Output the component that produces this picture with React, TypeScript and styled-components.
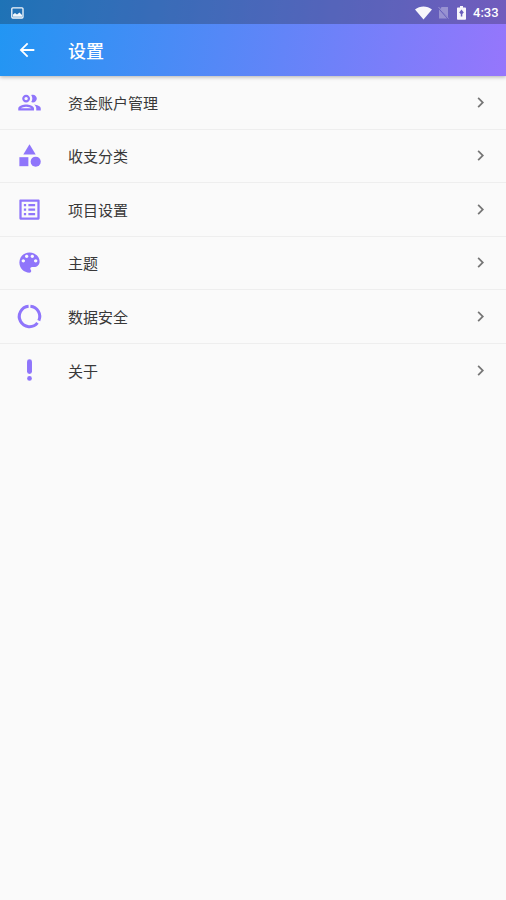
import React from "react";
import styled, { createGlobalStyle } from "styled-components";
import { MdArrowBack, MdCategory, MdChevronRight, MdListAlt, MdOutlinePeople } from "react-icons/md";

const GlobalStyle = createGlobalStyle`
  * { box-sizing: border-box; }
  body {
    margin: 0;
    background: #fafafa;
    font-family: Roboto, "Noto Sans CJK SC", sans-serif;
  }
`;

const Screen = styled.div`
  display: flex;
  flex-direction: column;
  min-height: 900px;
  background: #fafafa;
`;

const Header = styled.header`
  background: linear-gradient(100deg, #2196f3 0%, #9676fc 100%);
  box-shadow: 0 1px 4px rgba(0, 0, 0, 0.3);
`;

const StatusBar = styled.div`
  display: flex;
  align-items: center;
  height: 24px;
  padding: 1px 7px 0 11px;
  background: rgba(25, 25, 25, 0.28);
  color: #fff;
`;

const StatusIcons = styled.div`
  display: flex;
  align-items: center;
  margin-left: auto;
`;

const Glyph = styled.svg<{ $gap?: number; $dim?: boolean }>`
  display: block;
  flex: none;
  margin-right: ${(p) => p.$gap ?? 0}px;
  opacity: ${(p) => (p.$dim ? 0.32 : 0.95)};
`;

const Clock = styled.span`
  width: 26px;
  font-size: 13px;
  font-weight: 500;
  line-height: 16px;
  white-space: nowrap;
`;

const Toolbar = styled.div`
  display: flex;
  align-items: center;
  height: 52px;
  padding-left: 16px;
  color: #fff;
`;

const BackButton = styled.button`
  display: flex;
  width: 22px;
  margin: 0 30px 0 0;
  padding: 0;
  border: 0;
  background: none;
  color: inherit;
  font-size: 22px;
`;

const Title = styled.h1`
  margin: 0;
  padding-top: 3px;
  font-size: 18px;
  font-weight: 500;
  line-height: 26px;
`;

const List = styled.ul`
  margin: 0;
  padding: 0;
  list-style: none;
`;

const Row = styled.li`
  display: flex;
  align-items: center;
  height: 53.5px;
  padding: 0 15px 0 16px;
  border-bottom: 1px solid #eeeeee;

  &:last-child {
    border-bottom: 0;
  }
`;

const RowIcon = styled.span`
  display: flex;
  width: 52px;
  color: #8f75fb;
  font-size: 27px;
`;

const Label = styled.span`
  flex: 1;
  padding-top: 3px;
  color: #383838;
  font-size: 15px;
  line-height: 22px;
`;

const Arrow = styled(MdChevronRight)`
  width: 21px;
  height: 21px;
  color: #757575;
`;

const PaletteIcon = () => (
  <svg width="1em" height="1em" viewBox="0 0 24 24" fill="currentColor">
    <path d="M12 3c-4.97 0-9 4.03-9 9s4.03 9 9 9c.83 0 1.5-.67 1.5-1.5 0-.39-.15-.74-.39-1.01-.23-.26-.38-.61-.38-.99 0-.83.67-1.5 1.5-1.5H16c2.76 0 5-2.24 5-5 0-4.42-4.03-8-9-8zm-5.5 9c-.83 0-1.5-.67-1.5-1.5S5.67 9 6.5 9 8 9.67 8 10.5 7.33 12 6.5 12zm3-4C8.67 8 8 7.33 8 6.5S8.67 5 9.5 5s1.5.67 1.5 1.5S10.33 8 9.5 8zm5 0c-.83 0-1.5-.67-1.5-1.5S13.67 5 14.5 5s1.5.67 1.5 1.5S15.33 8 14.5 8zm3 4c-.83 0-1.5-.67-1.5-1.5S16.67 9 17.5 9s1.5.67 1.5 1.5-.67 1.5-1.5 1.5z" />
  </svg>
);

const DataRingIcon = () => (
  <svg width="1em" height="1em" viewBox="0 0 24 24" fill="none" stroke="currentColor" strokeWidth="2.7">
    <path d="M12.8 2.93A9.1 9.1 0 0 1 20.3 15.7" />
    <path d="M11.2 2.93A9.1 9.1 0 1 0 19.1 17.7" />
  </svg>
);

const ExclamationIcon = () => (
  <svg width="1em" height="1em" viewBox="0 0 24 24" fill="currentColor">
    <rect x="9.8" y="2" width="4.4" height="13" rx="2.2" />
    <circle cx="12" cy="19" r="2.1" />
  </svg>
);

const items: { label: string; icon: React.ComponentType }[] = [
  { label: "资金账户管理", icon: MdOutlinePeople },
  { label: "收支分类", icon: MdCategory },
  { label: "项目设置", icon: MdListAlt },
  { label: "主题", icon: PaletteIcon },
  { label: "数据安全", icon: DataRingIcon },
  { label: "关于", icon: ExclamationIcon },
];

export default function App() {
  return (
    <Screen>
      <GlobalStyle />
      <Header>
        <StatusBar>
          <Glyph width="13" height="12" viewBox="0 0 13 12">
            <rect x="0.8" y="0.8" width="11.2" height="10.2" rx="1" fill="none" stroke="#fff" strokeWidth="1.3" />
            <path d="M2 9.8V7.5l2-1.5 2 1.600L8.500 5.500 11 8v1.800z" fill="#fff" />
          </Glyph>
          <StatusIcons>
            <Glyph $gap={6} width="17" height="14" viewBox="0 0 17 14">
              <path d="M0 3.5C4.8-.4 12.2-.4 17 3.5L8.5 13.5z" fill="#fff" />
            </Glyph>
            <Glyph $gap={8} $dim width="11" height="13" viewBox="0 0 11 13">
              <path d="M3.5 1H10v10.5L2.5 3zM1 3.5L9 12.5H1z" fill="#fff" />
              <path d="M.5 1l10 11.5" stroke="#fff" strokeWidth="1" />
            </Glyph>
            <Glyph $gap={7} width="9" height="14" viewBox="0 0 9 14">
              <path
                fillRule="evenodd"
                d="M3 0h3v1.5h2.2q.8 0 .8.8V13q0 .8-.8.8H.8Q0 13.8 0 13V2.3q0-.8.8-.8H3zM4.5 3.5L2.2 6.5 3.8 8v2.5h1.5V8l1.5-1.5z"
                fill="#fff"
              />
            </Glyph>
            <Clock>4:33</Clock>
          </StatusIcons>
        </StatusBar>
        <Toolbar>
          <BackButton aria-label="返回">
            <MdArrowBack />
          </BackButton>
          <Title>设置</Title>
        </Toolbar>
      </Header>
      <List>
        {items.map(({ label, icon: Icon }) => (
          <Row key={label}>
            <RowIcon>
              <Icon />
            </RowIcon>
            <Label>{label}</Label>
            <Arrow />
          </Row>
        ))}
      </List>
    </Screen>
  );
}
